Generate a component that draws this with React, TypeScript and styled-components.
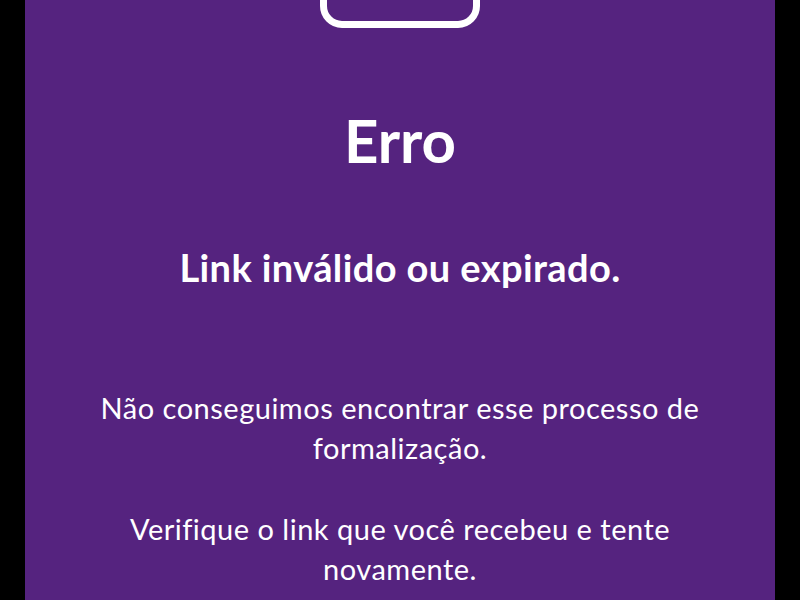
import React from 'react'
import styled, { createGlobalStyle } from 'styled-components'

const GlobalStyle = createGlobalStyle`
  html, body {
    margin: 0;
    padding: 0;
    background: #000;
  }
  body {
    font-family: Lato, "Open Sans", sans-serif;
    -webkit-font-smoothing: antialiased;
  }
`

const Page = styled.div`
  display: flex;
  justify-content: center;
  height: 600px;
  overflow: hidden;
  background: #000;
`

const Panel = styled.main`
  width: 750px;
  background: #55237f;
  color: #fff;
  display: flex;
  flex-direction: column;
  align-items: center;
  text-align: center;
  padding: 0 40px;
  box-sizing: border-box;
`

const LogoBox = styled.div`
  width: 160px;
  height: 60px;
  margin-top: -32px;
  flex-shrink: 0;
  box-sizing: border-box;
  border: 7px solid #fff;
  border-radius: 22px;
  display: flex;
  justify-content: center;
  align-items: flex-end;
  padding-bottom: 30px;
`

const LogoDot = styled.span`
  width: 6px;
  height: 6px;
  border-radius: 50%;
  background: #fff;
`

const Title = styled.h1`
  margin: 76px 0 0;
  font-size: 60px;
  font-weight: 700;
  line-height: 72px;
`

const Subtitle = styled.h2`
  margin: 68px 0 0;
  font-size: 38px;
  font-weight: 700;
  letter-spacing: 0.4px;
  line-height: 46px;
`

const Message = styled.p<{ $gap: number }>`
  margin: ${({ $gap }) => $gap}px 0 0;
  font-size: 29px;
  font-weight: 400;
  letter-spacing: 0.5px;
  line-height: 40px;
  max-width: 640px;
`

export default function App() {
  return (
    <>
      <GlobalStyle />
      <Page>
        <Panel>
          <LogoBox>
            <LogoDot />
          </LogoBox>
          <Title>Erro</Title>
          <Subtitle>Link inválido ou expirado.</Subtitle>
          <Message $gap={98}>Não conseguimos encontrar esse processo de formalização.</Message>
          <Message $gap={41}>Verifique o link que você recebeu e tente novamente.</Message>
        </Panel>
      </Page>
    </>
  )
}
